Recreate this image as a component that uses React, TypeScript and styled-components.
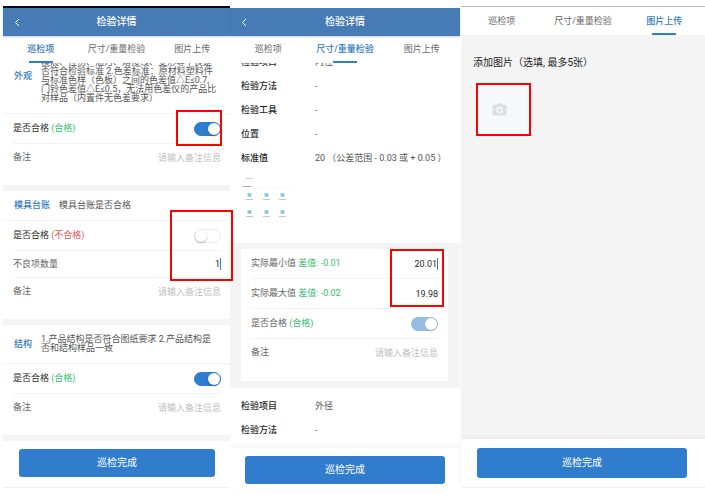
import React, { useState } from "react";
import styled, { createGlobalStyle, css } from "styled-components";

const color = {
  header: "#467bb5",
  primary: "#2f7dcc",
  active: "#3179bf",
  text: "#2b2b2b",
  muted: "#666",
  hint: "#c0c0c0",
  green: "#35be6b",
  red: "#e0524f",
  mark: "#fe0000",
  band: "#f4f4f4",
  line: "#f3f3f3",
};

const GlobalStyle = createGlobalStyle`
  *, *::before, *::after { box-sizing: border-box; }
  body { margin: 0; background: #fff; }
  body, button, input {
    font-family: Roboto, "Noto Sans CJK SC", sans-serif;
    font-size: 9px;
    line-height: 9px;
  }
`;

const Page = styled.main`
  display: grid;
  grid-template-columns: 227fr 230fr 245fr;
  min-height: 100vh;
  padding: 6px 0 7px 3px;
`;

const Screen = styled.section<{ $raised?: boolean }>`
  position: relative;
  z-index: ${(p) => (p.$raised ? 1 : 0)};
  display: flex;
  flex-direction: column;
  min-width: 0;
`;

const UploadScreen = styled(Screen)`
  margin-left: 1px;
  background: ${color.band};
`;

const TopEdge = styled.div<{ $tone: "black" | "none" | "blue" }>`
  height: ${(p) => (p.$tone === "blue" ? 1 : 2)}px;
  background: ${(p) => ({ black: "#0a0a0a", none: "#fff", blue: "#a9c3dc" })[p.$tone]};
`;

const Header = styled.header`
  display: grid;
  grid-template-columns: 28px 1fr 28px;
  align-items: center;
  height: 28px;
  background: ${color.header};
  color: #fff;
  box-shadow: 0 1px 2px rgba(40, 70, 110, 0.25);
  position: relative;
  z-index: 2;
`;

const BackButton = styled.button`
  display: flex;
  justify-content: center;
  padding: 0;
  border: 0;
  background: none;
  color: inherit;
`;

const Title = styled.h1`
  margin: 0;
  font-size: 10px;
  line-height: 12px;
  font-weight: 500;
  text-align: center;
`;

const TabBar = styled.nav<{ $tall?: boolean }>`
  position: relative;
  z-index: 1;
  display: grid;
  grid-template-columns: repeat(3, 1fr);
  height: ${(p) => (p.$tall ? 28 : 27)}px;
  background: #fff;
`;

const Tab = styled.button<{ $active: boolean }>`
  position: relative;
  padding: 0;
  border: 0;
  background: none;
  white-space: nowrap;
  color: ${(p) => (p.$active ? color.active : color.muted)};
  font-weight: ${(p) => (p.$active ? 500 : 400)};
  ${(p) =>
    p.$active &&
    css`
      &::after {
        content: "";
        position: absolute;
        left: calc(50% - 12px);
        bottom: 0;
        width: 24px;
        height: 2px;
        background: ${color.primary};
      }
    `}
`;

const Body = styled.div`
  flex: 1;
  overflow-x: visible;
  overflow-y: clip;
  background: ${color.band};
`;

const Scrolled = styled.div<{ $by: number }>`
  margin-top: -${(p) => p.$by}px;
`;

const Group = styled.section`
  position: relative;
  margin-bottom: 6px;
  background: #fff;
`;

const GroupHead = styled.div`
  display: flex;
  align-items: center;
  gap: 9px;
  padding: 10px 8px 10px 11px;
  border-bottom: 1px solid ${color.line};
`;

const GroupName = styled.h2`
  margin: 0;
  flex: none;
  font-size: 9px;
  line-height: 9px;
  font-weight: 500;
  color: ${color.active};
`;

const Description = styled.p<{ $continued?: boolean }>`
  margin: 0;
  padding-top: ${(p) => (p.$continued ? 9 : 0)}px;
  white-space: pre;
  color: #555;
`;

const Fields = styled.div`
  padding: 0 9px 14px 10px;
`;

const Field = styled.div<{ $size?: "short" | "remark" }>`
  position: relative;
  display: flex;
  align-items: center;
  justify-content: space-between;
  height: ${(p) => (p.$size ? 27 : 30)}px;
  border-bottom: ${(p) => (p.$size === "remark" ? "0" : `1px solid ${color.line}`)};
`;

const FieldLabel = styled.label<{ $strong?: boolean }>`
  flex: none;
  color: ${(p) => (p.$strong ? color.text : color.muted)};
`;

const Note = styled.span<{ $bad?: boolean }>`
  color: ${(p) => (p.$bad ? color.red : color.green)};
`;

const TextInput = styled.input<{ $caret?: boolean }>`
  flex: 1;
  min-width: 0;
  height: 12px;
  padding: 0;
  border: 0;
  border-right: ${(p) => (p.$caret ? "1px solid #2f80e8" : "0")};
  outline: 0;
  background: none;
  color: ${color.text};
  text-align: right;
  &::placeholder {
    color: ${color.hint};
  }
`;

const Switch = styled.input.attrs({ type: "checkbox", role: "switch" })`
  appearance: none;
  position: relative;
  flex: none;
  width: 27px;
  height: 14px;
  margin: 0;
  border: 1px solid #ececec;
  border-radius: 7px;
  background: #fff;
  &::before {
    content: "";
    display: block;
    width: 12px;
    height: 12px;
    border-radius: 50%;
    background: #fff;
    box-shadow: 0 1px 2px rgba(0, 0, 0, 0.3);
  }
  &:checked {
    border-color: ${color.primary};
    background: ${color.primary};
  }
  &:checked::before {
    margin-left: 13px;
  }
  &:disabled {
    opacity: 0.5;
  }
`;

const Mark = styled.div`
  position: absolute;
  border: 2px solid ${color.mark};
  pointer-events: none;
`;

const SwitchMark = styled(Mark)`
  top: -4px;
  right: -1px;
  width: 46px;
  height: 36px;
`;

const DefectMark = styled(Mark)`
  top: 19px;
  right: -3px;
  width: 63px;
  height: 71px;
`;

const ValueMark = styled(Mark)`
  top: 0;
  right: 4px;
  width: 54px;
  height: 58px;
`;

const Footer = styled.footer<{ $kind: "plain" | "raised" | "large" }>`
  position: relative;
  padding: ${(p) => ({ plain: "8px 15px 10px 16px", raised: "8px 15px 4px", large: "9px 18px 9px 16px" })[p.$kind]};
  border-bottom: ${(p) => (p.$kind === "raised" ? "0" : "1px solid #f0f0f0")};
  background: #fff;
  box-shadow: ${(p) => (p.$kind === "plain" ? "none" : "0 -2px 6px rgba(0, 0, 0, 0.05)")};
`;

const SubmitButton = styled.button<{ $large?: boolean }>`
  display: block;
  width: 100%;
  height: ${(p) => (p.$large ? 30 : 28)}px;
  padding: 0;
  border: 0;
  border-radius: 3px;
  background: ${color.primary};
  color: #fff;
  font-size: 10px;
  line-height: 12px;
`;

const InfoBlock = styled.div<{ $next?: boolean }>`
  padding: ${(p) => (p.$next ? "6px 8px 6px 11px" : "0 8px 20px 11px")};
  background: #fff;
`;

const InfoList = styled.dl`
  display: grid;
  grid-template-columns: 74px 1fr;
  grid-auto-rows: 24px;
  align-items: center;
  margin: 0;
  white-space: pre;
`;

const InfoName = styled.dt`
  color: #1f1f1f;
  font-weight: 500;
`;

const InfoValue = styled.dd`
  margin: 0;
  color: #555;
`;

const Thumbnail = styled.svg`
  display: block;
  margin-top: 3px;
`;

const Card = styled.section`
  position: relative;
  margin: 6px 12px 7px 11px;
  padding: 0 10px 15px;
  background: #fff;
`;

const Upload = styled.div`
  flex: 1;
  padding: 22px 12px;
`;

const UploadTitle = styled.label`
  display: block;
  font-size: 10px;
  line-height: 12px;
  color: #1f1f1f;
`;

const UploadTile = styled.button`
  position: relative;
  display: flex;
  align-items: center;
  justify-content: center;
  width: 55px;
  height: 53px;
  margin: 14px 0 0 3px;
  padding: 0 9px 0 0;
  border: 0;
  background: #f7f8fa;
`;

const TileMark = styled(Mark)`
  inset: 0;
`;

const tabNames = ["巡检项", "尺寸/重量检验", "图片上传"];

function Tabs({ active, tall }: { active: number; tall?: boolean }) {
  return (
    <TabBar $tall={tall}>
      {tabNames.map((name, i) => (
        <Tab key={name} type="button" $active={i === active}>
          {name}
        </Tab>
      ))}
    </TabBar>
  );
}

function AppHeader() {
  return (
    <Header>
      <BackButton type="button" aria-label="返回">
        <svg width="6" height="9" viewBox="0 0 6 9" fill="none" stroke="currentColor">
          <path d="M5 1 1.5 4.5 5 8" />
        </svg>
      </BackButton>
      <Title>检验详情</Title>
    </Header>
  );
}

function SwitchField({
  id,
  initial,
  strong,
  disabled,
  children,
}: {
  id: string;
  initial: boolean;
  strong?: boolean;
  disabled?: boolean;
  children?: React.ReactNode;
}) {
  const [on, setOn] = useState(initial);
  return (
    <Field>
      <FieldLabel htmlFor={id} $strong={strong}>
        是否合格 <Note $bad={!on}>{on ? "(合格)" : "(不合格)"}</Note>
      </FieldLabel>
      <Switch id={id} checked={on} disabled={disabled} onChange={(e) => setOn(e.target.checked)} />
      {children}
    </Field>
  );
}

function RemarkField({ id }: { id: string }) {
  return (
    <Field $size="remark">
      <FieldLabel htmlFor={id}>备注</FieldLabel>
      <TextInput id={id} placeholder="请输入备注信息" />
    </Field>
  );
}

function Info({ rows }: { rows: [string, string][] }) {
  return (
    <InfoList>
      {rows.map(([name, value]) => (
        <React.Fragment key={name}>
          <InfoName>{name}</InfoName>
          <InfoValue>{value}</InfoValue>
        </React.Fragment>
      ))}
    </InfoList>
  );
}

function DrawingThumbnail() {
  return (
    <Thumbnail width="56" height="50" viewBox="0 0 56 50" aria-hidden="true">
      <path d="M5 5.5h7" stroke="#cfcfcf" />
      <path d="M2 13.5h8" stroke="#a8a8a8" />
      <path d="M14 15.5h36" stroke="#f8f8f8" />
      {[22, 39].map((y) =>
        [8.5, 25.5, 41.5].map((x) => (
          <g key={`${x}-${y}`}>
            <rect x={x - 2} y={y - 2} width="4" height="4" fill="#a5d2ec" />
            <path d={`M${x - 1} ${y - 1}l2 2`} fill="none" stroke="#5aa6d2" />
            <path d={`M${x - 3.5} ${y + 4.5}h7`} stroke="#c4c4c4" />
          </g>
        )),
      )}
    </Thumbnail>
  );
}

function CameraIcon() {
  return (
    <svg width="15" height="13" viewBox="0 0 15 13" aria-hidden="true">
      <path
        fill="#dcdee0"
        fillRule="evenodd"
        d="M4.6 1.800 5.4.7Q5.700.3 6.200.3h2.600q.5 0 .8.4l.8 1.100h2.800q1.300 0 1.300 1.300v8.100q0 1.300-1.300 1.300H1.800Q.5 12.500.5 11.200V3.100Q.5 1.800 1.800 1.800ZM7.500 3.700a3.300 3.300 0 1 0 0 6.600 3.300 3.300 0 0 0 0-6.600Zm0 1.500a1.800 1.800 0 1 1 0 3.600 1.800 1.800 0 0 1 0-3.600Z"
      />
    </svg>
  );
}

const appearance = [
  "模痕、拉伤、油污、熔接线、变形等不良是",
  "否符合检验标准 2.色差标准：原材料塑料件",
  "与标准色样（色板）之间的色差值△E≤0.7,",
  "门铃色差值△E≤0.5，无法用色差仪的产品比",
  "对样品（内置件无色差要求）",
].join("\n");

const structure = "1.产品结构是否符合图纸要求 2.产品结构是\n否和结构样品一致";

export default function App() {
  return (
    <>
      <GlobalStyle />
      <Page>
        <Screen $raised>
          <TopEdge $tone="black" />
          <AppHeader />
          <Tabs active={0} />
          <Body>
            <Scrolled $by={24}>
              <Group>
                <GroupHead>
                  <GroupName>外观</GroupName>
                  <Description $continued>{appearance}</Description>
                </GroupHead>
                <Fields>
                  <SwitchField id="look-ok" initial strong>
                    <SwitchMark />
                  </SwitchField>
                  <RemarkField id="look-remark" />
                </Fields>
              </Group>
              <Group>
                <GroupHead>
                  <GroupName>模具台账</GroupName>
                  <Description>模具台账是否合格</Description>
                </GroupHead>
                <Fields>
                  <SwitchField id="mold-ok" initial={false} strong />
                  <Field $size="short">
                    <FieldLabel htmlFor="mold-count">不良项数量</FieldLabel>
                    <TextInput id="mold-count" defaultValue="1" $caret />
                  </Field>
                  <RemarkField id="mold-remark" />
                </Fields>
                <DefectMark />
              </Group>
              <Group>
                <GroupHead>
                  <GroupName>结构</GroupName>
                  <Description>{structure}</Description>
                </GroupHead>
                <Fields>
                  <SwitchField id="build-ok" initial strong />
                  <RemarkField id="build-remark" />
                </Fields>
              </Group>
            </Scrolled>
          </Body>
          <Footer $kind="plain">
            <SubmitButton type="button">巡检完成</SubmitButton>
          </Footer>
        </Screen>

        <Screen>
          <TopEdge $tone="none" />
          <AppHeader />
          <Tabs active={1} />
          <Body>
            <Scrolled $by={13}>
              <InfoBlock>
                <Info
                  rows={[
                    ["检验项目", "内径"],
                    ["检验方法", "-"],
                    ["检验工具", "-"],
                    ["位置", "-"],
                    ["标准值", "20 （公差范围 - 0.03 或 + 0.05 ）"],
                  ]}
                />
                <DrawingThumbnail />
              </InfoBlock>
              <Card>
                <Field>
                  <FieldLabel htmlFor="min">
                    实际最小值 <Note>差值: -0.01</Note>
                  </FieldLabel>
                  <TextInput id="min" defaultValue="20.01" $caret />
                </Field>
                <Field>
                  <FieldLabel htmlFor="max">
                    实际最大值 <Note>差值: -0.02</Note>
                  </FieldLabel>
                  <TextInput id="max" defaultValue="19.98" />
                </Field>
                <SwitchField id="size-ok" initial disabled />
                <RemarkField id="size-remark" />
                <ValueMark />
              </Card>
              <InfoBlock $next>
                <Info
                  rows={[
                    ["检验项目", "外径"],
                    ["检验方法", "-"],
                  ]}
                />
              </InfoBlock>
            </Scrolled>
          </Body>
          <Footer $kind="raised">
            <SubmitButton type="button">巡检完成</SubmitButton>
          </Footer>
        </Screen>

        <UploadScreen>
          <TopEdge $tone="blue" />
          <Tabs active={2} tall />
          <Upload>
            <UploadTitle htmlFor="upload">添加图片（选填, 最多5张）</UploadTitle>
            <UploadTile id="upload" type="button">
              <CameraIcon />
              <TileMark />
            </UploadTile>
          </Upload>
          <Footer $kind="large">
            <SubmitButton type="button" $large>
              巡检完成
            </SubmitButton>
          </Footer>
        </UploadScreen>
      </Page>
    </>
  );
}
